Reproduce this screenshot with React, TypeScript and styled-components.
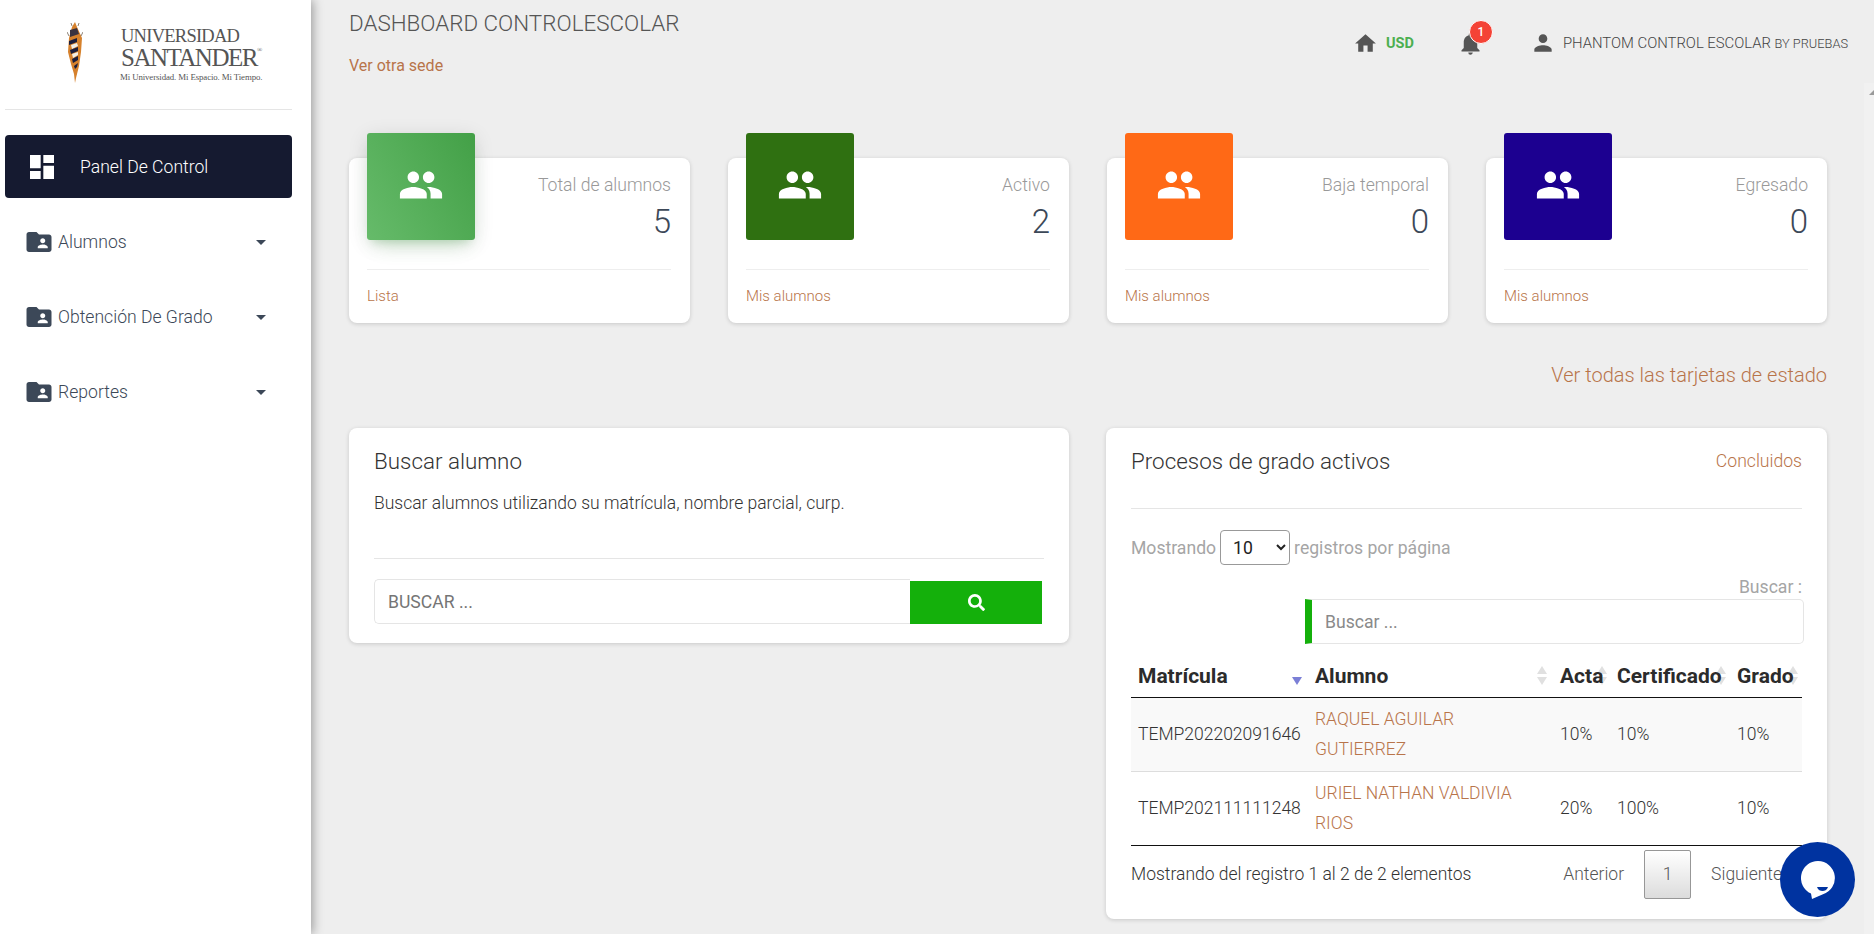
import * as React from 'react';
import styled, { createGlobalStyle } from 'styled-components';
import {
	MdArrowDropDown,
	MdDashboard,
	MdFolderShared,
	MdHome,
	MdNotifications,
	MdPeople,
	MdPerson,
} from 'react-icons/md';
import { FaSearch } from 'react-icons/fa';

const GlobalStyle = createGlobalStyle`
	html, body {
		margin: 0;
		height: 100%;
		overflow: hidden;
		background: #eeeeee;
		font-family: Roboto, "Liberation Sans", sans-serif;
		font-weight: 300;
		color: #3c4858;
	}
	* {
		box-sizing: border-box;
	}
`;

const stats = [
	{ title: 'Total de alumnos', value: '5', link: 'Lista', bg: 'linear-gradient(60deg, #66bb6a, #43a047)', glow: true },
	{ title: 'Activo', value: '2', link: 'Mis alumnos', bg: '#2f7011' },
	{ title: 'Baja temporal', value: '0', link: 'Mis alumnos', bg: '#ff6916' },
	{ title: 'Egresado', value: '0', link: 'Mis alumnos', bg: '#1c0090' },
];

const menu = ['Alumnos', 'Obtención De Grado', 'Reportes'];

const rows = [
	{ id: 'TEMP202202091646', name: 'RAQUEL AGUILAR GUTIERREZ', acta: '10%', cert: '10%', grado: '10%' },
	{ id: 'TEMP202111111248', name: 'URIEL NATHAN VALDIVIA RIOS', acta: '20%', cert: '100%', grado: '10%' },
];

const LogoMark = () => (
	<svg width="16" height="61" viewBox="0 0 16 61">
		<path d="M8 0 L10 5 L15 16 L14 30 L12 44 L9 56 L8 61 L7 52 L4 42 L1 30 L2 16 L5 5 Z" fill="#d6812c" />
		<path d="M3 8 L10 6 L12 12 L3 15 Z" fill="#3b3340" />
		<path d="M2 19 L10 16 L10 20 L2 23 Z" fill="#1b1e3d" />
		<path d="M4 23 L10 21 L11 24 L5 27 Z" fill="#f2efe8" />
		<path d="M3 28 L11 25 L11 29 L4 32 Z" fill="#1b1e3d" />
		<path d="M5 32 L11 30 L11 33 L6 36 Z" fill="#f2efe8" />
		<path d="M5 37 L11 34 L11 38 L6 41 Z" fill="#1b1e3d" />
		<path d="M7 44 L11 41 L10 45 L8 47 Z" fill="#1b1e3d" />
		<path d="M2 14 L0 10 M14 14 L16 10 M5 4 L4 1 M11 4 L12 1" stroke="#5a4a3a" strokeWidth="0.7" />
	</svg>
);

const ChatIcon = () => (
	<svg width="34" height="38" viewBox="0 0 34 38">
		<path d="M17 0 A17 17 0 0 1 22 33.2 L11 38 L10 32.5 A17 17 0 0 1 17 0 Z" fill="#ffffff" />
		<path d="M16 26 H27 C26 29 23.5 30 21.5 30 C19.5 30 17 29 16 26 Z" fill="#0033a0" />
	</svg>
);

export default function App() {
	return (
		<Page>
			<GlobalStyle />
			<Sidebar>
				<Brand>
					<LogoMark />
					<BrandText>
						<BrandTop>UNIVERSIDAD</BrandTop>
						<BrandName>SANTANDER<sup>®</sup></BrandName>
						<BrandTag>Mi Universidad. Mi Espacio. Mi Tiempo.</BrandTag>
					</BrandText>
				</Brand>
				<ActiveItem>
					<MdDashboard size={32} />
					<span>Panel De Control</span>
				</ActiveItem>
				<Menu>
					{menu.map((item) => (
						<MenuItem key={item}>
							<MdFolderShared size={30} />
							<MenuLabel>{item}</MenuLabel>
							<MdArrowDropDown size={24} />
						</MenuItem>
					))}
				</Menu>
			</Sidebar>
			<Main>
				<Header>
					<div>
						<PageTitle>DASHBOARD CONTROLESCOLAR</PageTitle>
						<SedeLink>Ver otra sede</SedeLink>
					</div>
					<TopNav>
						<TopItem>
							<MdHome size={25} />
							<Currency>USD</Currency>
						</TopItem>
						<BellWrap>
							<MdNotifications size={27} />
							<Badge>1</Badge>
						</BellWrap>
						<TopItem>
							<MdPerson size={26} />
							<UserName>
								PHANTOM CONTROL ESCOLAR <small>BY PRUEBAS</small>
							</UserName>
						</TopItem>
					</TopNav>
				</Header>

				<StatRow>
					{stats.map((s) => (
						<StatCard key={s.title}>
							<StatTop>
								<StatTile $bg={s.bg} $glow={s.glow}>
									<MdPeople size={46} />
								</StatTile>
								<StatText>
									<StatTitle>{s.title}</StatTitle>
									<StatValue>{s.value}</StatValue>
								</StatText>
							</StatTop>
							<StatFooter>{s.link}</StatFooter>
						</StatCard>
					))}
				</StatRow>

				<AllLink>Ver todas las tarjetas de estado</AllLink>

				<Columns>
					<SearchCard>
						<CardTitle>Buscar alumno</CardTitle>
						<CardText>Buscar alumnos utilizando su matrícula, nombre parcial, curp.</CardText>
						<SearchDivider />
						<SearchRow>
							<SearchInput placeholder="BUSCAR ..." />
							<SearchButton>
								<FaSearch size={17} />
							</SearchButton>
						</SearchRow>
					</SearchCard>

					<TableCard>
						<TableCardHead>
							<CardTitle>Procesos de grado activos</CardTitle>
							<CardLink>Concluidos</CardLink>
						</TableCardHead>
						<LengthRow>
							Mostrando
							<LengthSelect defaultValue="10">
								<option>10</option>
								<option>25</option>
							</LengthSelect>
							registros por página
						</LengthRow>
						<FilterLabel>Buscar :</FilterLabel>
						<FilterInput placeholder="Buscar ..." />
						<Table>
							<colgroup>
								<col width="177" />
								<col width="245" />
								<col width="57" />
								<col width="120" />
								<col width="72" />
							</colgroup>
							<thead>
								<tr>
									<Th>Matrícula<SortDown $right={6} $active /></Th>
									<Th>Alumno<SortUp $right={6} /><SortDown $right={6} /></Th>
									<Th>Acta<SortUp $right={3} /><SortDown $right={3} /></Th>
									<Th>Certificado<SortUp $right={4} /><SortDown $right={4} /></Th>
									<Th>Grado<SortUp $right={4} /><SortDown $right={4} /></Th>
								</tr>
							</thead>
							<tbody>
								{rows.map((r, i) => (
									<Tr key={r.id} $odd={i % 2 === 0}>
										<Td>{r.id}</Td>
										<Td><NameLink>{r.name}</NameLink></Td>
										<Td>{r.acta}</Td>
										<Td>{r.cert}</Td>
										<Td>{r.grado}</Td>
									</Tr>
								))}
							</tbody>
						</Table>
						<TableFooter>
							<span>Mostrando del registro 1 al 2 de 2 elementos</span>
							<Pagination>
								<PageLink>Anterior</PageLink>
								<PageCurrent>1</PageCurrent>
								<PageLink>Siguiente</PageLink>
							</Pagination>
						</TableFooter>
					</TableCard>
				</Columns>
			</Main>
			<ScrollStrip />
			<ChatButton>
				<ChatIcon />
			</ChatButton>
		</Page>
	);
}

const Page = styled.div`
	display: flex;
	width: 1874px;
	height: 934px;
	overflow: hidden;
	background: #eeeeee;
`;

const Sidebar = styled.aside`
	flex: 0 0 311px;
	height: 100%;
	background: #ffffff;
	padding: 0 19px 0 5px;
	box-shadow: 2px 0 10px rgba(0, 0, 0, 0.35);
	position: relative;
	z-index: 2;
`;

const Brand = styled.div`
	display: flex;
	align-items: flex-start;
	height: 110px;
	padding: 22px 0 0 62px;
	border-bottom: 1px solid #e5e5e5;
`;

const BrandText = styled.div`
	margin-left: 38px;
	font-family: "Liberation Serif", serif;
	font-weight: 400;
	color: #555555;
	white-space: nowrap;
`;

const BrandTop = styled.div`
	font-size: 18.5px;
	line-height: 20px;
	margin-top: 4px;
	letter-spacing: -0.75px;
`;

const BrandName = styled.div`
	font-size: 25px;
	line-height: 23px;
	letter-spacing: -1.5px;
	sup {
		font-size: 7px;
		line-height: 0;
		vertical-align: 14px;
	}
`;

const BrandTag = styled.div`
	font-size: 8.8px;
	line-height: 10px;
	margin-top: 3px;
	margin-left: -1px;
	letter-spacing: -0.1px;
`;

const ActiveItem = styled.div`
	display: flex;
	align-items: center;
	height: 63px;
	margin-top: 25px;
	padding-left: 21px;
	gap: 22px;
	border-radius: 4px;
	background: #151a30;
	color: #ffffff;
	font-size: 17.6px;
	font-weight: 300;
`;

const Menu = styled.nav`
	display: flex;
	flex-direction: column;
	gap: 45px;
	margin-top: 29px;
`;

const MenuItem = styled.div`
	display: flex;
	align-items: center;
	height: 30px;
	padding-left: 19px;
	padding-right: 19px;
	color: #3c4858;
`;

const MenuLabel = styled.span`
	flex: 1;
	margin-left: 4px;
	font-size: 17.6px;
	color: #3c4858;
`;

const Main = styled.main`
	flex: 1;
	min-width: 0;
	padding: 0 47px 0 38px;
`;

const Header = styled.header`
	display: flex;
	justify-content: space-between;
	height: 133px;
	margin-right: -21px;
`;

const PageTitle = styled.div`
	margin-top: 11px;
	font-size: 22.4px;
	line-height: 24px;
	color: #555555;
`;

const SedeLink = styled.a`
	display: block;
	margin-top: 19px;
	font-size: 16px;
	line-height: 24px;
	font-weight: 400;
	color: #b8744a;
`;

const TopNav = styled.div`
	display: flex;
	align-items: flex-start;
	padding-top: 29px;
	color: #555555;
`;

const TopItem = styled.div`
	display: flex;
	align-items: center;
	height: 28px;
	gap: 8px;
`;

const Currency = styled.span`
	font-size: 14.5px;
	font-weight: 700;
	color: #4caf50;
`;

const BellWrap = styled.div`
	position: relative;
	height: 28px;
	display: flex;
	align-items: center;
	margin: 0 46px 0 43px;
`;

const Badge = styled.span`
	position: absolute;
	top: -9px;
	left: 12px;
	width: 24px;
	height: 24px;
	display: flex;
	align-items: center;
	justify-content: center;
	border-radius: 50%;
	border: 1px solid #ffffff;
	background: #f44336;
	color: #ffffff;
	font-size: 12px;
	font-weight: 500;
`;

const UserName = styled.span`
	font-size: 14.85px;
	font-weight: 300;
	color: #444444;
	white-space: nowrap;
	margin-left: -1px;
	small {
		font-size: 12.8px;
	}
`;

const StatRow = styled.section`
	display: grid;
	grid-template-columns: repeat(4, 341px);
	justify-content: space-between;
`;

const StatCard = styled.div`
	height: 165px;
	margin-top: 25px;
	padding: 0 19px 0 18px;
	border-radius: 8px;
	background: #ffffff;
	box-shadow: 0 1px 4px rgba(0, 0, 0, 0.16);
`;

const StatTop = styled.div`
	display: flex;
	justify-content: space-between;
	height: 112px;
	border-bottom: 1px solid #eeeeee;
`;

const StatTile = styled.div<{ $bg: string; $glow?: boolean }>`
	display: flex;
	align-items: flex-start;
	justify-content: center;
	width: 108px;
	height: 107px;
	margin-top: -25px;
	padding-top: 29px;
	border-radius: 3px;
	background: ${(p) => p.$bg};
	color: #ffffff;
	box-shadow: ${(p) =>
		p.$glow
			? '0 12px 20px -10px rgba(76, 175, 80, 0.28), 0 4px 20px 0 rgba(0, 0, 0, 0.12), 0 7px 8px -5px rgba(76, 175, 80, 0.2)'
			: 'none'};
`;

const StatText = styled.div`
	text-align: right;
	padding-top: 15px;
`;

const StatTitle = styled.div`
	font-size: 17.6px;
	line-height: 24px;
	color: #999999;
`;

const StatValue = styled.div`
	margin-top: 7px;
	font-size: 33px;
	line-height: 36px;
	color: #3c4858;
`;

const StatFooter = styled.a`
	display: block;
	margin-top: 17px;
	font-size: 15px;
	line-height: 18px;
	font-weight: 300;
	color: #b8744a;
`;

const AllLink = styled.a`
	display: block;
	margin-top: 40px;
	text-align: right;
	font-size: 20px;
	line-height: 24px;
	font-weight: 300;
	color: #b8744a;
`;

const Columns = styled.section`
	display: grid;
	grid-template-columns: 720px 721px;
	justify-content: space-between;
	align-items: start;
	margin-top: 41px;
`;

const Card = styled.div`
	padding: 0 25px;
	border-radius: 8px;
	background: #ffffff;
	box-shadow: 0 1px 4px rgba(0, 0, 0, 0.16);
`;

const SearchCard = styled(Card)`
	height: 215px;
	padding-top: 21px;
`;

const CardTitle = styled.div`
	font-size: 22.4px;
	line-height: 24px;
	color: #333333;
`;

const CardText = styled.div`
	margin-top: 18px;
	font-size: 17.5px;
	line-height: 24px;
	color: #333333;
`;

const SearchDivider = styled.hr`
	margin: 43px 0 20px;
	border: 0;
	border-top: 1px solid #e5e5e5;
`;

const SearchRow = styled.div`
	display: flex;
	height: 45px;
	padding-right: 2px;
`;

const SearchInput = styled.input`
	flex: 1;
	height: 45px;
	padding: 0 13px;
	border: 1px solid #e5e5e5;
	border-right: 0;
	border-radius: 5px 0 0 5px;
	outline: none;
	font: 400 17.6px Roboto, sans-serif;
	&::placeholder {
		color: #757575;
		opacity: 1;
	}
`;

const SearchButton = styled.div`
	flex: 0 0 132px;
	height: 43px;
	margin-top: 2px;
	display: flex;
	align-items: center;
	justify-content: center;
	background: #14b00b;
	color: #ffffff;
`;

const TableCard = styled(Card)`
	height: 491px;
`;

const TableCardHead = styled.div`
	display: flex;
	justify-content: space-between;
	height: 81px;
	padding-top: 21px;
	border-bottom: 1px solid #e5e5e5;
`;

const CardLink = styled.a`
	font-size: 17.6px;
	line-height: 24px;
	font-weight: 300;
	color: #b8744a;
`;

const LengthRow = styled.div`
	display: flex;
	align-items: center;
	gap: 4px;
	height: 35px;
	margin-top: 21px;
	font-size: 17.6px;
	font-weight: 400;
	color: #a5a5a5;
`;

const LengthSelect = styled.select`
	width: 70px;
	height: 35px;
	padding-left: 8px;
	border: 1px solid #999999;
	border-radius: 4px;
	background: #ffffff;
	color: #222222;
	font: 400 17.6px Roboto, sans-serif;
`;

const FilterLabel = styled.div`
	margin-top: 12px;
	text-align: right;
	font-size: 17.6px;
	line-height: 20px;
	font-weight: 400;
	color: #a5a5a5;
`;

const FilterInput = styled.input`
	display: block;
	width: 499px;
	height: 45px;
	margin: 2px -3px 0 174px;
	padding: 0 13px;
	border: 1px solid #e5e5e5;
	border-left: 7px solid #14b00b;
	border-radius: 0 5px 5px 0;
	outline: none;
	font: 400 17.6px Roboto, sans-serif;
	&::placeholder {
		color: #8a8a8a;
		opacity: 1;
	}
`;

const Table = styled.table`
	width: 671px;
	table-layout: fixed;
	border-collapse: collapse;
	border-bottom: 1.5px solid #111111;
	isolation: isolate;
`;

const Th = styled.th`
	position: relative;
	height: 53px;
	padding: 11px 0 0 7px;
	border-bottom: 1.5px solid #111111;
	text-align: left;
	font-size: 21px;
	font-weight: 700;
	color: #2b2b2b;
	white-space: nowrap;
`;

const SortUp = styled.i<{ $right: number }>`
	position: absolute;
	z-index: -1;
	top: 22px;
	right: ${(p) => p.$right}px;
	border: 5px solid transparent;
	border-top: 0;
	border-bottom: 8px solid #e0e0e0;
`;

const SortDown = styled.i<{ $right: number; $active?: boolean }>`
	position: absolute;
	z-index: -1;
	top: 33px;
	right: ${(p) => p.$right}px;
	border: 5px solid transparent;
	border-bottom: 0;
	border-top: 8px solid ${(p) => (p.$active ? '#7b7fd6' : '#e0e0e0')};
`;

const Tr = styled.tr<{ $odd: boolean }>`
	height: 74px;
	background: ${(p) => (p.$odd ? '#f9f9f9' : '#ffffff')};
	td {
		border-top: ${(p) => (p.$odd ? 'none' : '1px solid #dddddd')};
	}
`;

const Td = styled.td`
	padding: 0 5px 0 7px;
	font-size: 17.5px;
	line-height: 30px;
	color: #333333;
`;

const NameLink = styled.a`
	color: #b8744a;
`;

const TableFooter = styled.div`
	display: flex;
	align-items: center;
	justify-content: space-between;
	height: 49px;
	margin-top: 4px;
	font-size: 17.5px;
	color: #333333;
`;

const Pagination = styled.div`
	display: flex;
	align-items: center;
`;

const PageLink = styled.span`
	padding: 0 20px;
	color: #555555;
`;

const PageCurrent = styled.span`
	display: flex;
	align-items: center;
	justify-content: center;
	width: 47px;
	height: 49px;
	border: 1px solid #979797;
	border-radius: 2px;
	background: linear-gradient(to bottom, #ffffff, #dcdcdc);
	color: #555555;
`;

const ScrollStrip = styled.div`
	position: fixed;
	top: 83px;
	right: 0;
	bottom: 0;
	width: 10px;
	background: #f1f1f1;
	&::before {
		content: '';
		position: absolute;
		top: 7px;
		right: 0;
		border-style: solid;
		border-width: 0 0 5px 5px;
		border-color: transparent transparent #9a9a9a transparent;
	}
`;

const ChatButton = styled.div`
	position: fixed;
	left: 1780px;
	top: 842px;
	width: 75px;
	height: 75px;
	display: flex;
	align-items: center;
	justify-content: center;
	border-radius: 50%;
	background: #0033a0;
	z-index: 3;
`;
